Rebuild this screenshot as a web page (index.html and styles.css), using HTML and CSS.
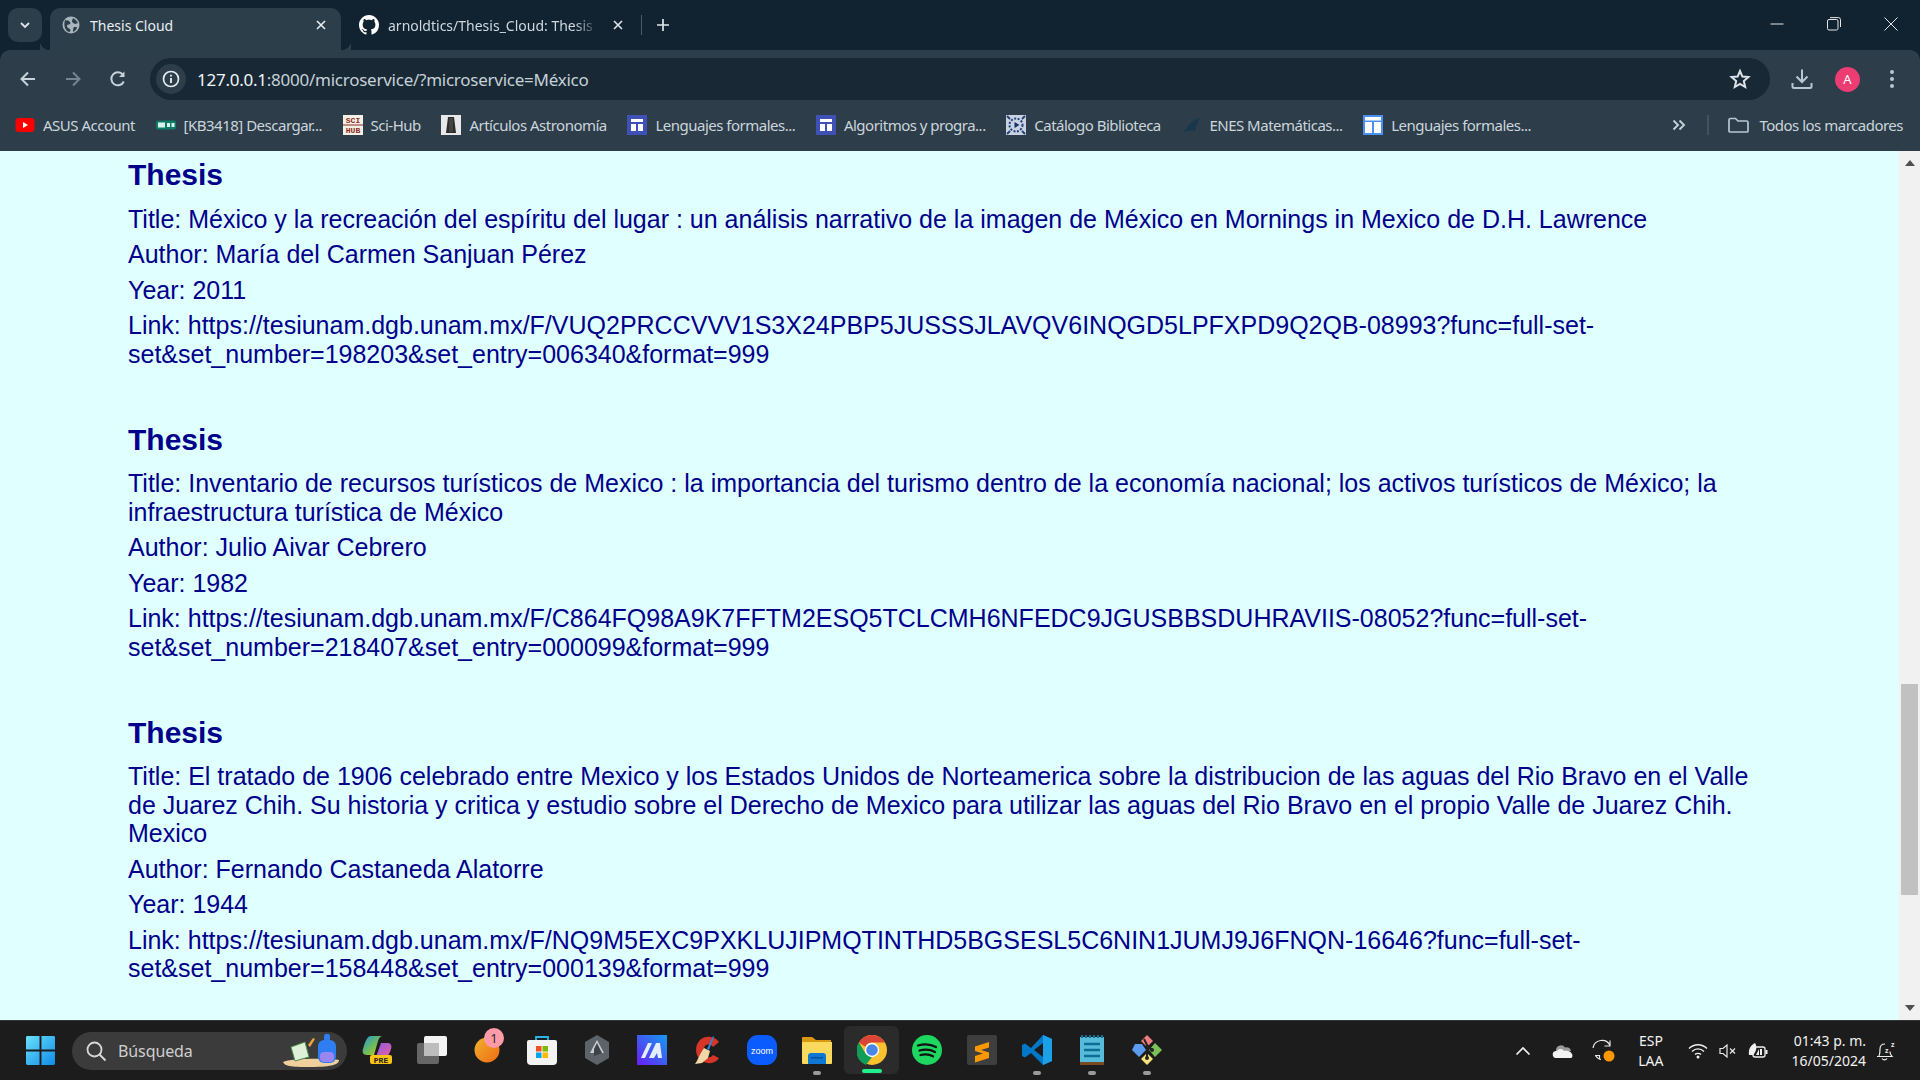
FILE: index.html
```html
<!DOCTYPE html>
<html lang="es">
<head>
<meta charset="utf-8">
<title>Thesis Cloud</title>
<link rel="stylesheet" href="styles.css">
</head>
<body>
<div class="screen">
  <header class="chrome">
    <div class="tabstrip">
      <button class="tabsearch"><svg width="14" height="14" viewBox="0 0 14 14"><path d="M3 5l4 4 4-4" fill="none" stroke="#dbe4ea" stroke-width="1.8"/></svg></button>
      <div class="tab tab-active">
        <svg class="fav fav-globe" width="18" height="18" viewBox="0 0 18 18"><circle cx="9" cy="9" r="8.5" fill="#a9b4bb"/><path d="M3 4c2 1 3 0 4 1s2 2 1 3-3 0-3 2 2 2 3 3 0 3-1 3C4 15 1 11 3 4zM11 2c2 1 4 3 5 5l-3 1c-1-1-3-1-3-3s1-1 1-3zM12 11l3 0c0 2-2 4-4 5 0-2 0-4 1-5z" fill="#2d3e4b"/></svg>
        <span class="tab-title">Thesis Cloud</span>
        <svg class="tab-x" width="12" height="12" viewBox="0 0 12 12"><path d="M2 2l8 8M10 2l-8 8" stroke="#e6edf1" stroke-width="1.6"/></svg>
      </div>
      <div class="tab tab-idle">
        <svg class="fav" width="20" height="20" viewBox="0 0 16 16"><path fill="#fff" d="M8 0C3.58 0 0 3.58 0 8c0 3.54 2.29 6.53 5.47 7.59.4.07.55-.17.55-.38 0-.19-.01-.82-.01-1.49-2.01.37-2.53-.49-2.69-.94-.09-.23-.48-.94-.82-1.13-.28-.15-.68-.52-.01-.53.63-.01 1.08.58 1.23.82.72 1.21 1.87.87 2.33.66.07-.52.28-.87.51-1.07-1.78-.2-3.64-.89-3.64-3.95 0-.87.31-1.59.82-2.15-.08-.2-.36-1.02.08-2.12 0 0 .67-.21 2.2.82.64-.18 1.32-.27 2-.27.68 0 1.36.09 2 .27 1.53-1.04 2.2-.82 2.2-.82.44 1.1.16 1.92.08 2.12.51.56.82 1.27.82 2.15 0 3.07-1.87 3.75-3.65 3.95.29.25.54.73.54 1.48 0 1.07-.01 1.93-.01 2.2 0 .21.15.46.55.38A8.013 8.013 0 0016 8c0-4.42-3.58-8-8-8z"/></svg>
        <span class="tab-title tab-title-fade">arnoldtics/Thesis_Cloud: Thesis</span>
        <svg class="tab-x" width="12" height="12" viewBox="0 0 12 12"><path d="M2 2l8 8M10 2l-8 8" stroke="#dfe7ec" stroke-width="1.6"/></svg>
      </div>
      <span class="tab-sep"></span>
      <svg class="newtab" width="14" height="14" viewBox="0 0 14 14"><path d="M7 1v12M1 7h12" stroke="#dfe7ec" stroke-width="1.7"/></svg>
      <div class="winctrls">
        <svg width="14" height="14" viewBox="0 0 14 14"><path d="M0.5 7h13" stroke="#e6e6e6" stroke-width="1"/></svg>
        <svg width="14" height="14" viewBox="0 0 14 14"><rect x="0.5" y="2.5" width="10.5" height="10.5" rx="1.5" fill="none" stroke="#e6e6e6"/><path d="M3 .6h8.5a2 2 0 0 1 2 2V10" fill="none" stroke="#e6e6e6"/></svg>
        <svg width="14" height="14" viewBox="0 0 14 14"><path d="M.5.5l13 13M13.500.5l-13 13" stroke="#e6e6e6" stroke-width="1"/></svg>
      </div>
    </div>
    <div class="toolbar">
      <div class="navbtns">
        <svg width="20" height="20" viewBox="0 0 20 20"><path d="M17 10H4M10 3.500L3.500 10l6.500 6.500" fill="none" stroke="#c7d2da" stroke-width="2"/></svg>
        <svg width="20" height="20" viewBox="0 0 20 20"><path d="M3 10h13M10 3.500l6.500 6.500-6.500 6.500" fill="none" stroke="#76858f" stroke-width="2"/></svg>
        <svg width="20" height="20" viewBox="0 0 20 20"><path d="M15.800 12.500A6.500 6.500 0 1 1 15 5.800" fill="none" stroke="#c7d2da" stroke-width="2"/><path d="M16.500 2.500v5.500H11z" fill="#c7d2da"/></svg>
      </div>
      <div class="omnibox">
        <span class="siteinfo"><svg width="18" height="18" viewBox="0 0 18 18"><circle cx="9" cy="9" r="7.500" fill="none" stroke="#e4ebef" stroke-width="1.700"/><path d="M9 8v5M9 4.800v1.800" stroke="#e4ebef" stroke-width="1.900"/></svg></span>
        <span class="url">127.0.0.1<span class="url-rest">:8000/microservice/?microservice=México</span></span>
        <svg class="star" width="22" height="22" viewBox="0 0 22 22"><path d="M11 3l2.400 5.600 6 .5-4.600 4 1.400 5.900-5.200-3.100-5.200 3.100 1.400-5.900-4.600-4 6-.5z" fill="none" stroke="#dce4e9" stroke-width="2"/></svg>
      </div>
      <div class="tbtools">
        <svg width="22" height="22" viewBox="0 0 22 22"><path d="M11 1.500v12M5.500 8.500L11 14l5.500-5.500M1.500 15v3.500a1.500 1.500 0 0 0 1.500 1.500h16a1.500 1.500 0 0 0 1.500-1.500V15" fill="none" stroke="#b9c7d1" stroke-width="2"/></svg>
        <span class="avatar">A</span>
        <svg width="6" height="20" viewBox="0 0 6 20"><circle cx="3" cy="3" r="2" fill="#b9c7d1"/><circle cx="3" cy="10" r="2" fill="#b9c7d1"/><circle cx="3" cy="17" r="2" fill="#b9c7d1"/></svg>
      </div>
    </div>
    <nav class="bookmarks">
      <span class="bm"><svg width="20" height="20" viewBox="0 0 20 20"><rect x="0.500" y="3" width="19" height="14" rx="3.500" fill="#f00"/><path d="M8 7l5 3-5 3z" fill="#fff"/></svg>ASUS Account</span>
      <span class="bm"><svg width="20" height="20" viewBox="0 0 20 20"><rect y="5.500" width="20" height="9" rx="2" fill="#0f7d66"/><rect x="2" y="7.500" width="7" height="5" fill="#d9f3ec"/><rect x="11" y="8" width="3" height="4" fill="#d9f3ec"/><rect x="15.500" y="8" width="3" height="4" fill="#d9f3ec"/></svg>[KB3418] Descargar...</span>
      <span class="bm"><svg width="20" height="20" viewBox="0 0 20 20"><rect width="20" height="20" fill="#f4f0e6"/><text x="10" y="8" class="sci">SCI</text><text x="10" y="18" class="sci">HUB</text><rect y="9.500" width="20" height="1" fill="#8c2a22"/></svg>Sci-Hub</span>
      <span class="bm"><svg width="20" height="20" viewBox="0 0 20 20"><rect width="20" height="20" fill="#e8e8e8"/><path d="M5 18l2-16h6l2 16z" fill="#2c2c2c"/><path d="M9 3v14M11 3v14" stroke="#666" stroke-width=".8"/></svg>Artículos Astronomía</span>
      <span class="bm"><svg width="20" height="20" viewBox="0 0 20 20"><rect width="20" height="20" fill="#3f51b5"/><rect x="4" y="4" width="12" height="3" fill="#fff"/><rect x="4" y="9" width="5" height="7" fill="#fff"/><rect x="11" y="9" width="5" height="7" fill="#fff"/></svg>Lenguajes formales...</span>
      <span class="bm"><svg width="20" height="20" viewBox="0 0 20 20"><rect width="20" height="20" fill="#3f51b5"/><rect x="4" y="4" width="12" height="3" fill="#fff"/><rect x="4" y="9" width="5" height="7" fill="#fff"/><rect x="11" y="9" width="5" height="7" fill="#fff"/></svg>Algoritmos y progra...</span>
      <span class="bm"><svg width="20" height="20" viewBox="0 0 20 20"><rect width="20" height="20" fill="#c9d3e2"/><circle cx="10" cy="10" r="6.500" fill="none" stroke="#27427a" stroke-width="2" stroke-dasharray="2 1.500"/><path d="M1 1l3 3M19 1l-3 3M1 19l3-3M19 19l-3-3" stroke="#27427a" stroke-width="2"/><path d="M8.500 7v6l5-3z" fill="#16316a"/></svg>Catálogo Biblioteca</span>
      <span class="bm"><svg width="20" height="20" viewBox="0 0 20 20"><path d="M0 18c3-1 5-4 7-7s5-6 12-8c-2 3-2 5-4 8-1 3-1 4-1 6-2-2-3-2-4-1-3-1-6 1-10 2z" fill="#17384c"/></svg>ENES Matemáticas...</span>
      <span class="bm"><svg width="20" height="20" viewBox="0 0 20 20"><rect width="20" height="20" fill="#4a90f0"/><rect x="2" y="2" width="16" height="3.500" fill="#fff"/><rect x="2" y="7" width="7" height="11" fill="#fff"/><rect x="11" y="7" width="7" height="11" fill="#fff"/></svg>Lenguajes formales...</span>
      <span class="bm-spacer"></span>
      <svg class="bm-more" width="14" height="12" viewBox="0 0 14 12"><path d="M1.500 1.500L6 6l-4.500 4.500M7.500 1.500L12 6l-4.500 4.500" fill="none" stroke="#c4d0d8" stroke-width="1.900"/></svg>
      <span class="bm-sep"></span>
      <span class="bm bm-all"><svg width="21" height="16" viewBox="0 0 21 16"><path d="M1 3a1.500 1.500 0 0 1 1.500-1.500h5L10 4h8.500A1.500 1.500 0 0 1 20 5.500v8.500a1 1 0 0 1-1 1H2a1 1 0 0 1-1-1z" fill="none" stroke="#b9c7d1" stroke-width="1.700"/></svg>Todos los marcadores</span>
    </nav>
  </header>

  <div class="viewport">
    <main class="page">
      <section class="thesis">
        <h2>Thesis</h2>
        <p>Title: México y la recreación del espíritu del lugar : un análisis narrativo de la imagen de México en Mornings in Mexico de D.H. Lawrence</p>
        <p>Author: María del Carmen Sanjuan Pérez</p>
        <p>Year: 2011</p>
        <p>Link: https://tesiunam.dgb.unam.mx/F/VUQ2PRCCVVV1S3X24PBP5JUSSSJLAVQV6INQGD5LPFXPD9Q2QB-08993?func=full-set-set&amp;set_number=198203&amp;set_entry=006340&amp;format=999</p>
      </section>
      <section class="thesis">
        <h2>Thesis</h2>
        <p>Title: Inventario de recursos turísticos de Mexico : la importancia del turismo dentro de la economía nacional; los activos turísticos de México; la infraestructura turística de México</p>
        <p>Author: Julio Aivar Cebrero</p>
        <p>Year: 1982</p>
        <p>Link: https://tesiunam.dgb.unam.mx/F/C864FQ98A9K7FFTM2ESQ5TCLCMH6NFEDC9JGUSBBSDUHRAVIIS-08052?func=full-set-set&amp;set_number=218407&amp;set_entry=000099&amp;format=999</p>
      </section>
      <section class="thesis">
        <h2>Thesis</h2>
        <p>Title: El tratado de 1906 celebrado entre Mexico y los Estados Unidos de Norteamerica sobre la distribucion de las aguas del Rio Bravo en el Valle de Juarez Chih. Su historia y critica y estudio sobre el Derecho de Mexico para utilizar las aguas del Rio Bravo en el propio Valle de Juarez Chih. Mexico</p>
        <p>Author: Fernando Castaneda Alatorre</p>
        <p>Year: 1944</p>
        <p>Link: https://tesiunam.dgb.unam.mx/F/NQ9M5EXC9PXKLUJIPMQTINTHD5BGSESL5C6NIN1JUMJ9J6FNQN-16646?func=full-set-set&amp;set_number=158448&amp;set_entry=000139&amp;format=999</p>
      </section>
    </main>
    <aside class="scrollbar">
      <svg class="sb-arrow" width="10" height="6" viewBox="0 0 10 6"><path d="M5 0l5 6H0z" fill="#505050"/></svg>
      <div class="sb-thumb"></div>
      <span class="sb-fill"></span>
      <svg class="sb-arrow" width="10" height="6" viewBox="0 0 10 6"><path d="M0 0h10L5 6z" fill="#505050"/></svg>
    </aside>
  </div>

  <footer class="taskbar">
    <svg class="startbtn" width="30" height="30" viewBox="0 0 30 30"><defs><linearGradient id="w" x1="0" y1="0" x2="1" y2="1"><stop offset="0" stop-color="#6be0fb"/><stop offset="1" stop-color="#0f8be8"/></linearGradient></defs><path fill="url(#w)" d="M0 1.500A1.500 1.500 0 0 1 1.500 0H14v14H0zM16 0h12.500A1.500 1.500 0 0 1 30 1.500V14H16zM0 16h14v14H1.500A1.500 1.500 0 0 1 0 28.500zM16 16h14v12.500a1.500 1.500 0 0 1-1.500 1.500H16z"/></svg>
    <div class="searchbox">
      <svg width="22" height="22" viewBox="0 0 22 22"><circle cx="9.500" cy="9.500" r="7" fill="none" stroke="#d8d8d8" stroke-width="1.800"/><path d="M14.500 14.500l6 6" stroke="#d8d8d8" stroke-width="1.900"/></svg>
      <span class="search-label">Búsqueda</span>
      <svg class="search-art" width="58" height="36" viewBox="0 0 58 36"><path d="M1 29c6-4 50-4 56-2 0 4-6 7-28 7S3 33 1 29z" fill="#efcf9c"/><path d="M9 14l14-5 4 15-14 4z" fill="#dff0d8" stroke="#4b8f4e"/><path d="M26 12l5-7 2 1-5 8z" fill="#f2a33a"/><rect x="36" y="7" width="18" height="23" rx="6" fill="#2f7df0"/><rect x="42" y="1" width="6" height="7" rx="2" fill="#2f7df0"/><rect x="38" y="19" width="14" height="10" rx="4" fill="#9a86f2"/></svg>
    </div>
    <div class="apps">
      <span class="app"><svg width="30" height="30" viewBox="0 0 30 30"><defs><linearGradient id="c1" x1="0" y1="0" x2="1" y2="1"><stop offset="0" stop-color="#1e9ad6"/><stop offset=".6" stop-color="#7cc04a"/><stop offset="1" stop-color="#e7c83a"/></linearGradient><linearGradient id="c2" x1="0" y1="0" x2="1" y2="1"><stop offset="0" stop-color="#8a5be0"/><stop offset="1" stop-color="#ee5fa0"/></linearGradient></defs><path d="M9 1h12c-3 0-4 2-5 5l-4 14H5C1 20 0 17 1 14 3 7 5 1 9 1z" fill="url(#c1)"/><path d="M19 8h7c3 0 4 3 3 6-1 4-3 7-6 8h-9z" fill="url(#c2)"/><rect x="8" y="20" width="22" height="9" rx="2" fill="#f9c414"/><text x="19" y="27.500" class="pre">PRE</text></svg></span>
      <span class="app"><svg width="30" height="30" viewBox="0 0 30 30"><rect y="8" width="22" height="21" rx="2" fill="#666"/><rect x="7" y="1" width="23" height="20" rx="2" fill="#f4f4f4"/><rect x="7" y="8" width="15" height="13" fill="#bdbdbd"/></svg></span>
      <span class="app app-badged"><svg width="26" height="26" viewBox="0 0 26 26"><defs><linearGradient id="o" x1="0" y1="0" x2="1" y2="1"><stop offset="0" stop-color="#efb22e"/><stop offset="1" stop-color="#f06a12"/></linearGradient></defs><circle cx="13" cy="13" r="12.500" fill="url(#o)"/></svg><span class="badge">1</span></span>
      <span class="app"><svg width="30" height="30" viewBox="0 0 30 30"><path d="M9 6V2h12v4" fill="none" stroke="#28b5e8" stroke-width="1.800"/><path d="M0 7a2 2 0 0 1 2-2h26a2 2 0 0 1 2 2v19a4 4 0 0 1-4 4H4a4 4 0 0 1-4-4z" fill="#f3f3f3"/><rect x="9" y="11" width="5.500" height="5.500" fill="#f25022"/><rect x="15.500" y="11" width="5.500" height="5.500" fill="#7fba00"/><rect x="9" y="17.500" width="5.500" height="5.500" fill="#00a4ef"/><rect x="15.500" y="17.500" width="5.500" height="5.500" fill="#ffb900"/></svg></span>
      <span class="app"><svg width="26" height="30" viewBox="0 0 26 30"><path d="M13 0l12 7v16l-12 7L1 23V7z" fill="#5c6369"/><path d="M13 5l7 13H6z" fill="#c9ced2"/><path d="M10 14l3-6 5 10-8 3z" fill="#3c4246"/></svg></span>
      <span class="app"><svg width="30" height="30" viewBox="0 0 30 30"><defs><linearGradient id="m" x1="0" y1="1" x2="1" y2="0"><stop offset="0" stop-color="#6a1df5"/><stop offset="1" stop-color="#139bf0"/></linearGradient></defs><rect width="30" height="30" fill="url(#m)"/><path d="M4 23l7-15h4l-7 15zM12 23l7-15h4l2 15h-4l-1-5-3 5z" fill="#e4ecff"/></svg></span>
      <span class="app"><svg width="30" height="30" viewBox="0 0 30 30"><path d="M27 7C24 2 14-1 8 5S3 22 10 26s14 2 17-3l-6-3c-2 3-6 3-8 1s-2-8 0-10 6-2 8 1z" fill="#d6352a"/><path d="M21 1l1 1-5 13-2-1z" fill="#2b87dc"/><path d="M12 13l6 3-2 7-6 5-7 1c2-2 3-7 9-16z" fill="#f1d7a6"/></svg></span>
      <span class="app"><svg width="30" height="30" viewBox="0 0 30 30"><rect width="30" height="30" rx="11" fill="#0b5cff"/><text x="15" y="18.500" class="zoom">zoom</text></svg></span>
      <span class="app app-open"><svg width="30" height="30" viewBox="0 0 30 30"><path d="M0 3a1 1 0 0 1 1-1h9l4 3h15v6H0z" fill="#d99a12"/><path d="M0 7h30v21a1 1 0 0 1-1 1H1a1 1 0 0 1-1-1z" fill="#fbd95c"/><path d="M6 21a3 3 0 0 1 3-3h12a3 3 0 0 1 3 3v8H6z" fill="#0f78d4"/><rect x="9" y="22" width="12" height="1.500" fill="#0a4f94"/></svg></span>
      <span class="app app-active"><svg width="30" height="30" viewBox="0 0 30 30"><circle cx="15" cy="15" r="15" fill="#fbc02d"/><path d="M15 0A15 15 0 0 1 28 7.500H15A7.500 7.500 0 0 0 8.300 11.700L2 7.500A15 15 0 0 1 15 0z" fill="#db4437"/><path d="M2 7.500l6.500 11 6.500 3.500-6 8A15 15 0 0 1 2 7.500z" fill="#0f9d58"/><circle cx="15" cy="15" r="7.200" fill="#fff"/><circle cx="15" cy="15" r="5.800" fill="#4a86e8"/></svg></span>
      <span class="app"><svg width="30" height="30" viewBox="0 0 30 30"><circle cx="15" cy="15" r="15" fill="#1ed760"/><path d="M6 10.500c6-1.800 13-1.300 18 1.500M7.500 15.500c5-1.300 11-1 15.500 1.500M8.500 20c4-1 9-.8 12.500 1.300" fill="none" stroke="#121212" stroke-width="2.300" stroke-linecap="round"/></svg></span>
      <span class="app"><svg width="30" height="30" viewBox="0 0 30 30"><rect width="30" height="30" rx="2" fill="#3e3e3e"/><path d="M8 11.500l14-4.500v5.500l-8 2.500 8 2.500v5.500l-14 4.500V21l8-2.500-8-2.500z" fill="#ff9800"/></svg></span>
      <span class="app app-open"><svg width="30" height="30" viewBox="0 0 30 30"><path d="M21 0l9 4v22l-9 4-12-12-6 4.500-3-1.500v-11l3-1.500 6 4.500z" fill="#0078c8"/><path d="M21 0l9 4v22l-9 4z" fill="#1ba1e8"/><path d="M21 8v14l-9-7z" fill="#1c1c1c"/></svg></span>
      <span class="app app-open"><svg width="24" height="30" viewBox="0 0 24 30"><rect y="2" width="24" height="27" fill="#57bcd9"/><rect y="27" width="24" height="3" fill="#7a4a22"/><path d="M2 0v3M6 0v3M10 0v3M14 0v3M18 0v3M22 0v3" stroke="#1a6f94" stroke-width="2"/><path d="M4 9h16M4 15h16M4 21h16" stroke="#0e6c96" stroke-width="2.400"/></svg></span>
      <span class="app app-open"><svg width="30" height="30" viewBox="0 0 30 30"><path d="M15 0l6 6-6 6-6-6z" fill="#ef7d7d"/><path d="M3 9l7 0 4 6-7 7-7-7z" fill="#5b9bf0"/><path d="M23 8l7 7-7 7-6-7z" fill="#7cc05a"/><path d="M15 18l6 6-6 6-6-6z" fill="#f6e27a"/><path d="M12 4l3 6 5 5M15 10v13" stroke="#222" stroke-width="2" fill="none"/><circle cx="15" cy="23" r="2" fill="#222"/><circle cx="20" cy="15" r="2" fill="#222"/></svg></span>
    </div>
    <span class="tray-spacer"></span>
    <div class="tray">
      <svg class="t-chev" width="16" height="10" viewBox="0 0 16 10"><path d="M1.500 8.500L8 2l6.500 6.500" fill="none" stroke="#f0f0f0" stroke-width="1.700"/></svg>
      <svg class="t-cloud" width="22" height="14" viewBox="0 0 22 14"><path d="M4 7a5 5 0 0 1 9-3.500A4.500 4.500 0 0 1 19 7H4z" fill="#9b9b9b"/><path d="M4.500 14a3.500 3.500 0 0 1-.5-7h1c1-2 5-3 7 0 3-1 7 0 8 3 1 2 0 4-1 4z" fill="#f2f2f2"/></svg>
      <svg class="t-sync" width="24" height="24" viewBox="0 0 24 24"><path d="M1 9A9 9 0 0 1 18 6.500M18 1.500v5.500h-5.500M3 16.500h4.500v4M3.500 16.500A8 8 0 0 0 9 20.500" fill="none" stroke="#e8e8e8" stroke-width="1.200"/><circle cx="17" cy="17" r="5.500" fill="#ff9800"/></svg>
      <span class="t-lang">ESP<br>LAA</span>
      <svg class="t-wifi" width="20" height="16" viewBox="0 0 20 16"><path d="M1 5.500c5-5 13-5 18 0M4 8.500c3.500-3.500 8.500-3.500 12 0M7 11.500c1.500-1.500 4.500-1.500 6 0" fill="none" stroke="#f0f0f0" stroke-width="1.400"/><circle cx="10" cy="14" r="1.500" fill="#f0f0f0"/></svg>
      <svg class="t-vol" width="18" height="14" viewBox="0 0 18 14"><path d="M1 4.500h3l4-3.500v12L4 9.500H1z" fill="none" stroke="#e8e8e8" stroke-width="1.200"/><path d="M11 4.500l5 5M16 4.500l-5 5" stroke="#e8e8e8" stroke-width="1.200"/></svg>
      <svg class="t-batt" width="20" height="18" viewBox="0 0 20 18"><rect x="5" y="5" width="12" height="10" rx="2" fill="none" stroke="#f0f0f0" stroke-width="1.300"/><rect x="17.500" y="8" width="2" height="4" fill="#f0f0f0"/><path d="M1 13C0 7 3 3 7 1c2 3 2 8-2 12z" fill="#f0f0f0"/><path d="M8 13l3-6v6zM12 13V7h2v6z" fill="#f0f0f0"/></svg>
      <span class="t-clock">01:43 p. m.<br>16/05/2024</span>
      <svg class="t-bell" width="20" height="22" viewBox="0 0 20 22"><path d="M3 16c1-2 1-4 1-7 0-3 2-5 5-5M1 16.500h15c-1-1-2-2-2-5M6 18.500a3 3 0 0 0 5 0" fill="none" stroke="#ececec" stroke-width="1.200"/><text x="9" y="13" class="zz">z</text><text x="15" y="7" class="zz">z</text></svg>
    </div>
  </footer>
</div>
</body>
</html>
```
FILE: styles.css
```css
* { box-sizing: border-box; }
html, body { margin: 0; padding: 0; width: 1920px; height: 1080px; overflow: hidden; }
body { font-family: "Noto Sans", "Open Sans", sans-serif; }
.screen { display: flex; flex-direction: column; width: 1920px; height: 1080px; }
svg { flex: none; display: block; }

/* Tab strip */
.chrome { flex: none; background: #112230; }
.tabstrip { display: flex; align-items: flex-end; height: 50px; padding-left: 8px; position: relative; }
.tabsearch { width: 34px; height: 34px; margin-bottom: 8px; padding: 0; border: 0; border-radius: 10px; background: #2d3e4b; display: flex; align-items: center; justify-content: center; }
.tab { display: flex; align-items: center; height: 42px; padding-bottom: 8px; font-size: 14px; }
.tab-active { width: 291px; margin-left: 8px; padding-left: 12px; padding-right: 14px; background: #2d3e4b; border-radius: 10px 10px 0 0; color: #e8eef2; position: relative; }
.tab-active::before, .tab-active::after { content: ""; position: absolute; bottom: 0; width: 10px; height: 10px; background: radial-gradient(circle at 0 0, #112230 10px, #2d3e4b 10.5px); }
.tab-active::before { left: -10px; transform: scaleX(-1); }
.tab-active::after { right: -10px; }
.tab-idle { width: 300px; padding-left: 18px; padding-right: 17px; color: #cfd8de; }
.fav { margin-right: 9px; }
.fav-globe { margin-right: 10px; }
.tab-title { flex: 1; white-space: nowrap; }
.tab-title-fade { -webkit-mask-image: linear-gradient(90deg, #000 88%, transparent 100%); mask-image: linear-gradient(90deg, #000 88%, transparent 100%); }
.tab-x { margin-left: 12px; }
.tab-sep { width: 1px; height: 20px; background: #4a5a66; margin: 0 0 15px 0; }
.newtab { margin: 0 0 18px 14px; }
.winctrls { margin-left: auto; display: flex; align-items: center; gap: 43px; padding: 0 22px 19px 0; }

/* Toolbar */
.toolbar { display: flex; align-items: flex-end; height: 50px; background: #2d3d4a; border-radius: 10px 10px 0 0; padding: 0 18px 0 18px; }
.navbtns { display: flex; align-items: center; align-self: flex-start; height: 42px; margin-top: 8px; gap: 25px; width: 132px; }
.omnibox { display: flex; align-items: center; width: 1620px; height: 42px; background: #182935; border-radius: 21px; padding: 0 19px 0 6px; }
.siteinfo { display: flex; align-items: center; justify-content: center; width: 30px; height: 30px; border-radius: 50%; background: #2d3d4a; margin-right: 11px; }
.url { flex: 1; color: #f1f5f7; font-size: 17px; letter-spacing: -.25px; white-space: nowrap; }
.url-rest { color: #c6d0d7; }
.tbtools { display: flex; align-items: center; height: 42px; margin-left: 21px; }
.avatar { width: 25px; height: 25px; margin: 0 29px 0 22px; border-radius: 50%; background: #ec3c72; color: #fff; font-size: 13px; display: flex; align-items: center; justify-content: center; }

/* Bookmarks */
.bookmarks { display: flex; align-items: center; height: 51px; background: #2d3d4a; padding: 0 17px 2px 15px; gap: 21px; color: #cbd5db; font-size: 15px; letter-spacing: -.5px; }
.bm { display: flex; align-items: center; gap: 8px; white-space: nowrap; margin-right: -.4px; }
.bm-spacer { flex: 1; }
.bm-more { margin-right: 0; }
.bm-sep { width: 2px; height: 20px; background: #43525e; margin-right: -2px; }
.bm-all { gap: 10px; margin-right: 0; }
.sci { font: bold 8px "Liberation Mono", monospace; fill: #8c2a22; text-anchor: middle; letter-spacing: 0; }

/* Page */
.viewport { flex: 1; min-height: 0; display: flex; background: #e0ffff; }
.page { flex: 1; min-width: 0; overflow: hidden; padding: 0 138px 0 128px; color: #00008b; font-family: "Liberation Sans", Arial, sans-serif; font-size: 25px; }
.thesis { margin-bottom: 53.500px; }
.thesis h2 { margin: 6px 0 11.500px; font-size: 30px; line-height: 36px; }
.thesis p { margin: 0 0 7px; line-height: 28.500px; }

/* Scrollbar */
.scrollbar { flex: none; width: 21px; display: flex; flex-direction: column; align-items: center; background: #f1f1f1; padding: 9px 0; }
.sb-thumb { width: 17px; height: 211px; margin-top: 518px; background: #c1c1c1; }
.sb-fill { flex: 1; }

/* Taskbar */
.taskbar { flex: none; display: flex; align-items: center; height: 60px; background: #1c1c1c; border-top: 1px solid #333; color: #f2f2f2; padding-left: 26px; }
.startbtn { width: 29px; height: 29px; margin-right: 17px; }
.searchbox { display: flex; align-items: center; width: 275px; height: 38px; border-radius: 19px; background: #3b3b3b; padding: 0 7px 0 13px; color: #cfcfcf; font-size: 16px; }
.search-label { flex: 1; margin-left: 11px; letter-spacing: -.1px; }
.apps { display: flex; margin-left: 2px; margin-bottom: 2px; }
.app { position: relative; width: 55px; height: 48px; display: flex; align-items: center; justify-content: center; border-radius: 6px; }
.app-open::after, .app-active::after { content: ""; position: absolute; bottom: -1px; left: 50%; transform: translateX(-50%); width: 8px; height: 4px; border-radius: 2px; background: #9a9a9a; }
.app-active { background: #2b2b2b; }
.app-active::after { width: 20px; bottom: 1px; background: #20f08c; }
.badge { position: absolute; top: 2px; right: 10px; width: 20px; height: 20px; border-radius: 50%; background: #ff9aa8; color: #2a2a2a; font-size: 13px; display: flex; align-items: center; justify-content: center; }
.pre { font: bold 8px "Liberation Mono", monospace; fill: #222; text-anchor: middle; }
.zoom { font: 9px "Liberation Sans", sans-serif; fill: #fff; text-anchor: middle; }
.zz { font: bold 7px "Liberation Sans", sans-serif; fill: #ececec; }
.tray-spacer { flex: 1; }
.tray { display: flex; align-items: center; font-size: 14px; text-align: center; padding-right: 24px; }
.t-lang { line-height: 20px; margin: 0 24px 0 22px; }
.t-cloud { margin-left: 21px; }
.t-sync { margin-left: 18px; }
.t-vol { margin-left: 11px; }
.t-batt { margin-left: 11px; }
.t-clock { line-height: 20px; text-align: right; margin-left: 24px; }
.t-bell { margin-left: 10px; }
```
